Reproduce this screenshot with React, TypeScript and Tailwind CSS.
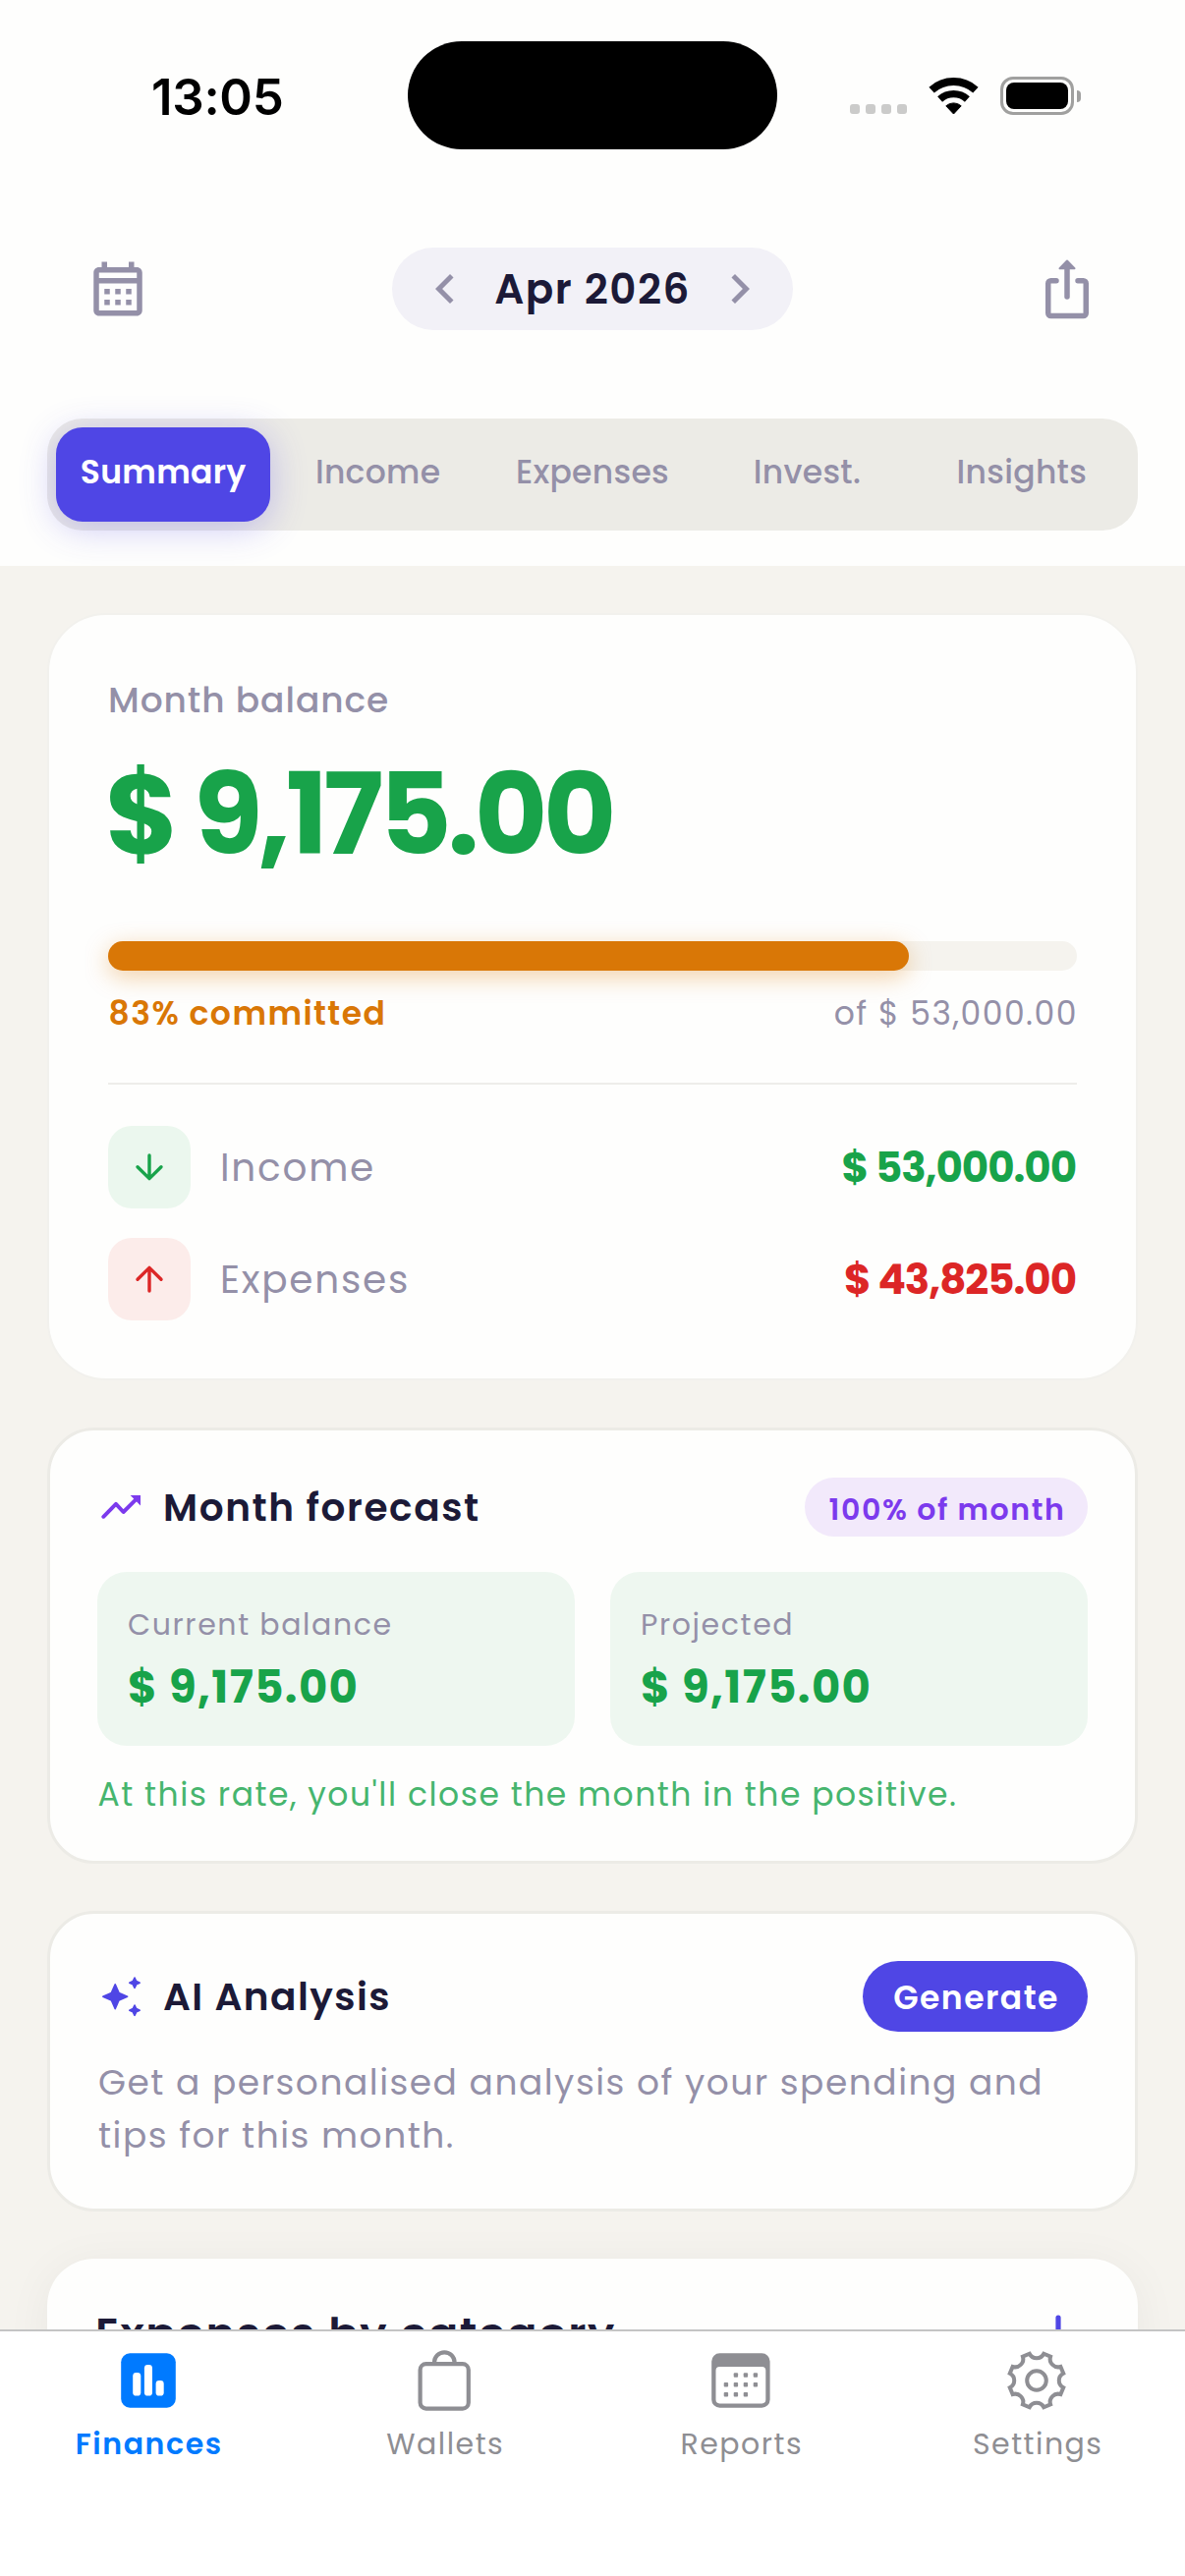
import type { ReactNode } from "react";

/* ---------- Icons ---------- */

function WifiIcon() {
  return (
    <svg width="51" height="38" viewBox="0 0 51 38" fill="none">
      <path d="M3.1 12.6A33.5 33.5 0 0 1 47.9 12.6" stroke="#000" strokeWidth="8" />
      <path d="M11.6 22A20.8 20.8 0 0 1 39.4 22" stroke="#000" strokeWidth="7.4" />
      <path d="M25.5 37 17.8 28.8A11.6 11.6 0 0 1 33.2 28.8Z" fill="#000" stroke="#000" strokeWidth="1" strokeLinejoin="round" />
    </svg>
  );
}

function CalendarIcon() {
  return (
    <svg width="66" height="66" viewBox="0 0 24 24" fill="#9490A8">
      <path d="M19 4h-1V2h-2v2H8V2H6v2H5c-1.11 0-1.99.9-1.99 2L3 20c0 1.1.89 2 2 2h14c1.1 0 2-.9 2-2V6c0-1.1-.9-2-2-2zm0 16H5V10h14v10zm0-12H5V6h14v2zM9 14H7v-2h2v2zm4 0h-2v-2h2v2zm4 0h-2v-2h2v2zm-8 4H7v-2h2v2zm4 0h-2v-2h2v2zm4 0h-2v-2h2v2z" />
    </svg>
  );
}

function ShareIcon() {
  return (
    <svg width="66" height="66" viewBox="0 0 66 66" fill="none" stroke="#9490A8" strokeWidth="5.5" strokeLinecap="round">
      <path d="M22 24.75H16.5A2.75 2.75 0 0 0 13.75 27.5V57.75A2.75 2.75 0 0 0 16.5 60.5H49.5A2.75 2.75 0 0 0 52.25 57.75V27.5A2.75 2.75 0 0 0 49.5 24.75H44" />
      <path d="M33 11V41" />
      <path d="M33 4.5 25.5 12.3H40.5Z" fill="#9490A8" strokeWidth="2" strokeLinejoin="round" />
    </svg>
  );
}

function Chevron({ dir }: { dir: "left" | "right" }) {
  return (
    <svg width="60" height="60" viewBox="0 0 24 24" fill="#9490A8">
      <path
        d={
          dir === "left"
            ? "M15.41 7.41L14 6l-6 6 6 6 1.41-1.41L10.83 12z"
            : "M10 6L8.59 7.41 13.17 12l-4.58 4.59L10 18l6-6z"
        }
      />
    </svg>
  );
}

function ArrowIcon({ color, up }: { color: string; up?: boolean }) {
  return (
    <svg width="42" height="42" viewBox="0 0 42 42" fill="none" stroke={color} strokeWidth="3.4" strokeLinecap="round" strokeLinejoin="round" className={up ? "rotate-180" : ""}>
      <path d="M21 9V32M9 20.8 21 32.6 33 20.8" />
    </svg>
  );
}

function TrendIcon() {
  return (
    <svg width="48" height="48" viewBox="0 0 48 48" fill="none">
      <path d="M6.3 33.8 19 20.8 26.6 29 40 15.6" stroke="#7C3AED" strokeWidth="3.9" strokeLinecap="round" strokeLinejoin="round" />
      <path d="M33.6 12H44V22.4Z" fill="#7C3AED" />
    </svg>
  );
}

function SparkleIcon() {
  return (
    <svg width="48" height="48" viewBox="0 0 48 48" fill="#4F46E5" stroke="#4F46E5" strokeWidth="1.6" strokeLinejoin="round">
      <path d="M18.2 11.8 22 20.4 30.6 24.2 22 28 18.2 36.6 14.4 28 5.8 24.2 14.4 20.4Z" />
      <path d="M38 5 39.7 8.5 43.2 10.2 39.7 11.9 38 15.4 36.3 11.9 32.8 10.2 36.3 8.5Z" />
      <path d="M38 33 39.7 36.5 43.2 38.2 39.7 39.9 38 43.4 36.3 39.9 32.8 38.2 36.3 36.5Z" />
    </svg>
  );
}

function PlusIcon() {
  return (
    <svg width="66" height="66" viewBox="0 0 66 66" fill="none" stroke="#4F46E5" strokeWidth="5.2" strokeLinecap="round">
      <path d="M33 16V50M16 33H50" />
    </svg>
  );
}

function FinancesIcon() {
  return (
    <svg width="56" height="56" viewBox="0 0 56 56">
      <rect x="0.2" y="0.3" width="55.6" height="55.4" rx="9" fill="#007AFF" />
      <rect x="12.2" y="20" width="8.1" height="23.6" rx="3.4" fill="#fff" />
      <rect x="23.9" y="12" width="8.1" height="31.6" rx="3.4" fill="#fff" />
      <rect x="35.6" y="28" width="8.1" height="15.6" rx="3.4" fill="#fff" />
    </svg>
  );
}

function WalletsIcon() {
  return (
    <svg width="60" height="66" viewBox="0 0 60 66" fill="none" stroke="#8E8E93" strokeWidth="4.2">
      <rect x="5.6" y="16.2" width="49.2" height="45.4" rx="6" />
      <path d="M20 16.2V14.6A10.3 10.3 0 0 1 40.6 14.6V16.2" />
    </svg>
  );
}

const calendarDots = [
  [22.7, 20.3], [32.7, 20.3], [42.7, 20.3],
  [12.7, 30], [22.7, 30], [32.7, 30], [42.7, 30],
  [12.7, 40], [22.7, 40], [32.7, 40],
];

function ReportsIcon() {
  return (
    <svg width="60" height="56" viewBox="0 0 60 56" fill="#8E8E93">
      <path
        fillRule="evenodd"
        d="M8.5 0.3H51.3A8.3 8.3 0 0 1 59.6 8.6V47.4A8.3 8.3 0 0 1 51.3 55.7H8.5A8.3 8.3 0 0 1 0.2 47.4V8.6A8.3 8.3 0 0 1 8.5 0.3ZM8.3 14A3.8 3.8 0 0 0 4.5 17.8V47.6A3.8 3.8 0 0 0 8.3 51.4H51.5A3.8 3.8 0 0 0 55.3 47.6V17.8A3.8 3.8 0 0 0 51.5 14Z"
      />
      {calendarDots.map(([x, y]) => (
        <rect key={`${x}-${y}`} x={x} y={y} width="4.4" height="4.4" rx="1" />
      ))}
    </svg>
  );
}

// Eight teeth joined by concave arcs.
const gearPath = (() => {
  const at = (deg: number) => {
    const a = (deg * Math.PI) / 180;
    return `${(31 + 28.2 * Math.cos(a)).toFixed(2)} ${(31 + 28.2 * Math.sin(a)).toFixed(2)}`;
  };
  let d = "";
  for (let k = 0; k < 8; k++) {
    d += `${k ? "L" : "M"}${at(45 * k - 15)}A8.2 8.2 0 0 0 ${at(45 * k + 15)}`;
  }
  return d + "Z";
})();

function SettingsIcon() {
  return (
    <svg width="62" height="62" viewBox="0 0 62 62" fill="none" stroke="#8E8E93" strokeWidth="4">
      <path d={gearPath} />
      <circle cx="31" cy="31" r="9.8" />
    </svg>
  );
}

/* ---------- Sections ---------- */

function StatusBar() {
  return (
    <div className="flex h-[192px] items-start justify-between">
      <div className="mt-[69px] w-[415px] pl-[154px] font-['Inter',sans-serif] text-[51px] leading-[60px] font-semibold tracking-[-0.3px] text-black">13:05</div>
      <div className="mt-[42px] h-[110px] w-[376px] rounded-full bg-black" />
      <div className="mt-[78px] flex h-[39px] w-[415px] items-center justify-end pr-[106px]">
        <div className="mt-[27px] flex gap-[6px]">
          {[0, 1, 2, 3].map((i) => (
            <div key={i} className="size-[10px] rounded-[3px] bg-[#CBCBCA]" />
          ))}
        </div>
        <div className="mr-[22px] ml-[22px]">
          <WifiIcon />
        </div>
        <div className="h-[39px] w-[75px] rounded-[13px] border-[3px] border-[#A0A09F] p-[3px]">
          <div className="h-full w-full rounded-[8px] bg-black" />
        </div>
        <div className="ml-[3px] h-[12px] w-[4px] rounded-r-full bg-[#A0A09F]" />
      </div>
    </div>
  );
}

const tabs = ["Summary", "Income", "Expenses", "Invest.", "Insights"];

function Header() {
  return (
    <header className="flex h-[576px] shrink-0 flex-col bg-[#FEFEFD]">
      <StatusBar />
      <div className="flex h-[204px] items-center justify-between px-[87px]">
        <CalendarIcon />
        <div className="flex h-[84px] w-[408px] items-center justify-between rounded-full bg-[#F2F1F7] px-[24px]">
          <Chevron dir="left" />
          <span className="mt-[2px] text-[42px] leading-[60px] font-semibold tracking-[1.5px] text-[#1C1A37]">Apr 2026</span>
          <Chevron dir="right" />
        </div>
        <ShareIcon />
      </div>
      <div className="mx-[48px] mt-[30px] flex h-[114px] rounded-[36px] bg-[#ECEBE6] p-[9px]">
        {tabs.map((t, i) => (
          <div
            key={t}
            className={
              i === 0
                ? "flex flex-1 items-center justify-center rounded-[27px] bg-[#4F46E5] text-[33px] font-semibold tracking-[0.3px] text-white shadow-[0_6px_36px_rgba(79,70,229,0.3)]"
                : "flex flex-1 items-center justify-center text-[33px] font-medium tracking-[0.3px] text-[#9490A8]"
            }
          >
            <span className="-mt-[5px]">{t}</span>
          </div>
        ))}
      </div>
    </header>
  );
}

function FlowRow({ icon, tile, label, amount, amountClass }: { icon: ReactNode; tile: string; label: string; amount: string; amountClass: string }) {
  return (
    <div className="flex h-[84px] items-center">
      <div className={`flex size-[84px] items-center justify-center rounded-[24px] ${tile}`}>{icon}</div>
      <span className="mt-[2px] ml-[30px] text-[39px] tracking-[1.75px] text-[#9490A8]">{label}</span>
      <span className={`mr-[1px] ml-auto text-[42px] font-bold tracking-[-1.05px] ${amountClass}`}>{amount}</span>
    </div>
  );
}

function BalanceCard() {
  const committed = 43825 / 53000;
  return (
    <section className="h-[781px] shrink-0 rounded-[60px] border-[2px] border-[#F2F1ED] bg-[#FEFEFD] px-[60px] pt-[60px]">
      <div className="text-[36px] leading-[54px] font-medium tracking-[0.93px] text-[#9490A8]">Month balance</div>
      <div className="mt-[17px] -ml-[3px] text-[114px] leading-[144px] font-bold tracking-[-4.5px] text-[#18A34A]">$ 9,175.00</div>
      <div className="mt-[57px] h-[30px] rounded-full bg-[#F5F3EE]">
        <div className="h-full rounded-full bg-[#D97706] shadow-[0_6px_24px_rgba(217,119,6,0.35)]" style={{ width: `${committed * 100}%` }} />
      </div>
      <div className="mt-[19px] flex justify-between text-[33px] leading-[50px]">
        <span className="ml-[0.5px] font-semibold tracking-[1.46px] text-[#D97706]">83% committed</span>
        <span className="-mr-[1px] tracking-[1.5px] text-[#9490A8]">of $ 53,000.00</span>
      </div>
      <div className="mt-[45px] h-[2px] bg-[#EEEDEA]" />
      <div className="mt-[42px] flex flex-col gap-[30px]">
        <FlowRow icon={<ArrowIcon color="#18A34A" />} tile="bg-[#EBF7EE]" label="Income" amount="$ 53,000.00" amountClass="text-[#18A34A]" />
        <FlowRow icon={<ArrowIcon color="#DC2626" up />} tile="bg-[#FCECEA]" label="Expenses" amount="$ 43,825.00" amountClass="text-[#DC2626]" />
      </div>
    </section>
  );
}

function ForecastBox({ label, amount }: { label: string; amount: string }) {
  return (
    <div className="h-[177px] rounded-[30px] bg-[#EEF7F0] px-[31px] pt-[32px]">
      <div className="text-[30px] leading-[44px] tracking-[1.6px] text-[#9490A8]">{label}</div>
      <div className="mt-[9px] text-[45px] leading-[66px] font-bold tracking-[1.4px] text-[#18A34A]">{amount}</div>
    </div>
  );
}

function ForecastCard() {
  return (
    <section className="mt-[48px] h-[444px] shrink-0 rounded-[48px] border-[3px] border-[#ECEBE6] bg-[#FEFEFD] p-[48px]">
      <div className="flex h-[60px] items-center">
        <TrendIcon />
        <h2 className="mt-[2px] ml-[19px] text-[39px] font-semibold tracking-[1.6px] text-[#1C1A37]">Month forecast</h2>
        <div className="ml-auto flex h-[60px] w-[288px] items-center justify-center rounded-full bg-[#F2E9FB] pt-[5px] pl-[2px] text-[30px] leading-[44px] font-semibold tracking-[1.6px] text-[#7C3AED]">100% of month</div>
      </div>
      <div className="mt-[36px] grid grid-cols-2 gap-[36px]">
        <ForecastBox label="Current balance" amount="$ 9,175.00" />
        <ForecastBox label="Projected" amount="$ 9,175.00" />
      </div>
      <p className="mt-[27px] ml-[0.5px] text-[33px] leading-[45px] tracking-[1.5px] whitespace-nowrap text-[#46B56E]">At this rate, you'll close the month in the positive.</p>
    </section>
  );
}

function AnalysisCard() {
  return (
    <section className="mt-[48px] h-[306px] shrink-0 rounded-[48px] border-[3px] border-[#ECEBE6] bg-[#FEFEFD] p-[48px]">
      <div className="flex h-[72px] items-center">
        <SparkleIcon />
        <h2 className="mt-[2px] ml-[19px] text-[39px] font-semibold tracking-[1.45px] text-[#1C1A37]">AI Analysis</h2>
        <button className="ml-auto flex h-[72px] w-[229px] items-center justify-center rounded-full bg-[#4F46E5] pt-[4px] pl-[2px] text-[33px] font-semibold tracking-[1.5px] text-white">Generate</button>
      </div>
      <p className="mt-[25px] ml-[1px] text-[36px] leading-[54px] tracking-[1.5px] text-[#9490A8]">Get a personalised analysis of your spending and tips for this month.</p>
    </section>
  );
}

function CategoryCard() {
  return (
    <section className="mt-[48px] h-[300px] shrink-0 rounded-[48px] bg-[#FEFEFD] px-[48px] pt-[44px] shadow-[0_6px_48px_rgba(0,0,0,0.05)]">
      <div className="flex h-[66px] items-center justify-between">
        <h2 className="ml-[1px] text-[45px] leading-[66px] font-semibold tracking-[1.5px] text-[#1C1A37]">Expenses by category</h2>
        <PlusIcon />
      </div>
    </section>
  );
}

const navItems = [
  { label: "Finances", icon: <FinancesIcon />, active: true },
  { label: "Wallets", icon: <WalletsIcon />, active: false },
  { label: "Reports", icon: <ReportsIcon />, active: false },
  { label: "Settings", icon: <SettingsIcon />, active: false },
];

function BottomNav() {
  return (
    <nav className="grid h-[251px] grid-cols-4 border-t-[2px] border-[#C4C4C4] bg-white">
      {navItems.map((n) => (
        <div key={n.label} className="flex flex-col items-center pt-[17px]">
          <div className="flex h-[66px] items-center">{n.icon}</div>
          <span
            className={
              n.active
                ? "mt-[10px] pl-[2px] text-[30px] leading-[44px] font-semibold tracking-[1.6px] text-[#007AFF]"
                : "mt-[10px] pl-[2px] text-[30px] leading-[44px] tracking-[1.5px] text-[#8E8E93]"
            }
          >
            {n.label}
          </span>
        </div>
      ))}
    </nav>
  );
}

export default function App() {
  return (
    <div className="h-[2622px] w-[1206px] overflow-hidden bg-[#F5F3EE] font-['Poppins','Inter',sans-serif]">
      <div className="flex h-[2371px] flex-col overflow-hidden">
        <Header />
        <main className="flex flex-col px-[48px] pt-[48px]">
          <BalanceCard />
          <ForecastCard />
          <AnalysisCard />
          <CategoryCard />
        </main>
      </div>
      <BottomNav />
    </div>
  );
}
